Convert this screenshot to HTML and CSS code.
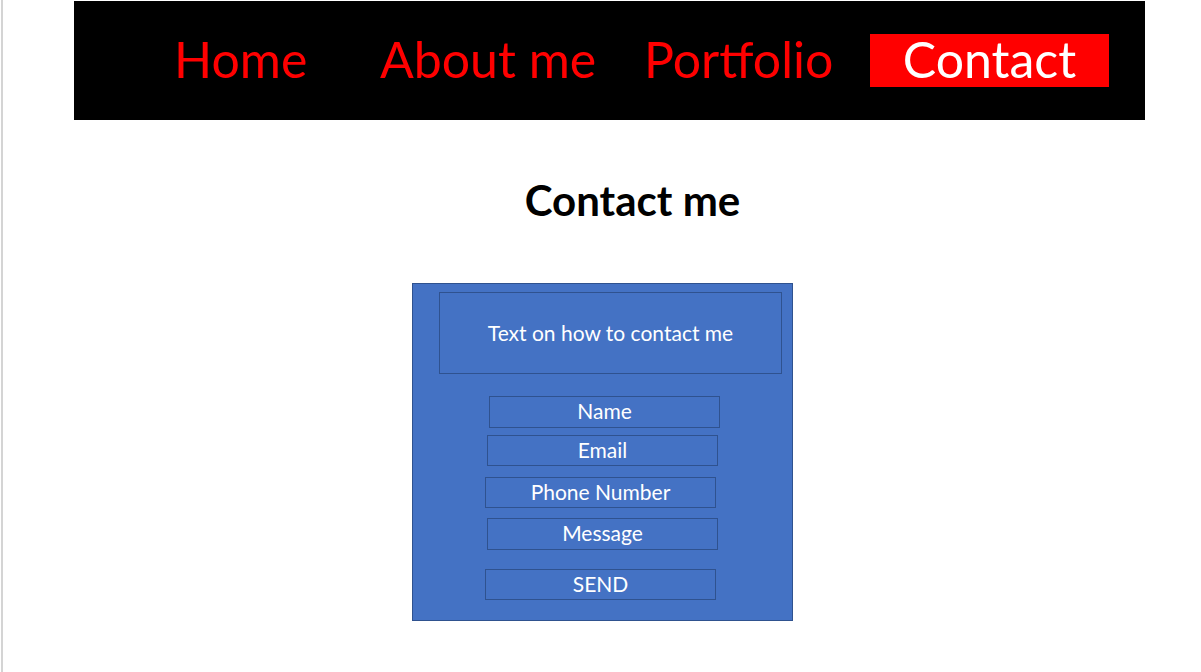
FILE: index.html
```html
<!DOCTYPE html>
<html lang="en">
<head>
<meta charset="utf-8">
<title>Contact</title>
<link rel="stylesheet" href="styles.css">
</head>
<body>
<div class="page">
  <header class="topbar">
    <nav class="nav">
      <a class="nav-item nav-home" href="#">Home</a>
      <a class="nav-item nav-about" href="#">About me</a>
      <a class="nav-item nav-portfolio" href="#">Portfolio</a>
      <a class="nav-item nav-contact" href="#">Contact</a>
    </nav>
  </header>
  <main class="content">
    <h1 class="title">Contact me</h1>
    <section class="panel">
      <div class="intro">Text on how to contact me</div>
      <div class="field f-name">Name</div>
      <div class="field f-email">Email</div>
      <div class="field f-phone">Phone Number</div>
      <div class="field f-message">Message</div>
      <div class="field f-send">SEND</div>
    </section>
  </main>
</div>
</body>
</html>
```

FILE: styles.css
```css
html, body {
  margin: 0;
  padding: 0;
  background: #ffffff;
}

body {
  font-family: Lato, "Open Sans", "Liberation Sans", sans-serif;
  padding-left: 1px;
}

.page {
  border-left: 2px solid #d4d4d4;
  min-height: 672px;
  box-sizing: border-box;
  padding-left: 71px;
  padding-top: 1px;
}

.topbar {
  width: 1071px;
  height: 119px;
  background: #000000;
  display: flex;
  align-items: center;
}

.nav {
  display: flex;
  align-items: center;
  padding-left: 100px;
}

.nav-item {
  font-size: 50px;
  line-height: 1;
  color: #ff0000;
  text-decoration: none;
  white-space: nowrap;
  padding-bottom: 4px;
  box-sizing: border-box;
}

.nav-home { width: 206px; }
.nav-about { width: 264px; }
.nav-portfolio { width: 226px; }

.nav-contact {
  width: 239px;
  height: 53px;
  background: #ff0000;
  color: #ffffff;
  display: flex;
  align-items: center;
  justify-content: center;
}

.content {
  width: 1071px;
}

.title {
  margin: 0;
  padding: 56px 0 0 46px;
  text-align: center;
  font-size: 42px;
  font-weight: 700;
  line-height: 48px;
  color: #000000;
}

.panel {
  margin: 59px 0 0 338px;
  width: 381px;
  height: 338px;
  box-sizing: border-box;
  background: #4472c4;
  border: 1px solid #2f528f;
  display: flex;
  flex-direction: column;
  align-items: flex-start;
  color: #ffffff;
  font-size: 21px;
}

.intro {
  margin: 8px 0 0 26px;
  width: 343px;
  height: 82px;
  box-sizing: border-box;
  border: 1px solid #2f528f;
  display: flex;
  align-items: center;
  justify-content: center;
  padding-bottom: 2px;
}

.field {
  width: 231px;
  box-sizing: border-box;
  border: 1px solid #2f528f;
  display: flex;
  align-items: center;
  justify-content: center;
  line-height: 1;
  padding-bottom: 3px;
}

.f-name { margin: 22px 0 0 76px; height: 32px; }
.f-email { margin: 7px 0 0 74px; height: 31px; }
.f-phone { margin: 11px 0 0 72px; height: 31px; }
.f-message { margin: 10px 0 0 74px; height: 32px; }
.f-send { margin: 19px 0 0 72px; height: 31px; }
```
